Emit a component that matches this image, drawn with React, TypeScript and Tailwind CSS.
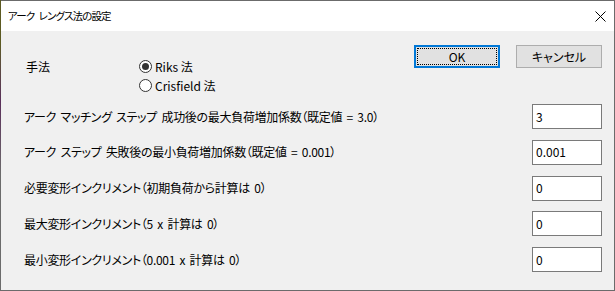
import React from "react";

const rows = [
  { label: "アーク マッチング ステップ 成功後の最大負荷増加係数（既定値 = 3.0）", value: "3" },
  { label: "アーク ステップ 失敗後の最小負荷増加係数（既定値 = 0.001）", value: "0.001" },
  { label: "必要変形インクリメント（初期負荷から計算は 0）", value: "0" },
  { label: "最大変形インクリメント（5 x 計算は 0）", value: "0" },
  { label: "最小変形インクリメント（0.001 x 計算は 0）", value: "0" },
];

function Radio({ checked, label }: { checked?: boolean; label: string }) {
  return (
    <div className="flex h-[19px] items-center gap-[3px]">
      <span className="flex h-[13px] w-[13px] items-center justify-center rounded-full border border-[#333] bg-white">
        {checked && <span className="h-[7px] w-[7px] rounded-full bg-[#333]" />}
      </span>
      <span>{label}</span>
    </div>
  );
}

export default function App() {
  return (
    <div className="flex h-[291px] w-[615px] font-['Yu_Gothic_UI','Noto_Sans_CJK_JP',sans-serif] text-[12px] leading-[16px] text-black [font-feature-settings:'palt']">
      {/* left window edge picks up the desktop colours */}
      <div className="w-px bg-linear-to-b from-[#5c5a22] from-15% via-[#5a2f5a] via-35% to-[#6b6b6b] to-60%" />
      <div className="flex flex-1 flex-col border-y border-r border-[#6b6b6b]">
        <div className="flex h-[30px] items-center bg-white pl-[7px] pr-[8px]">
          <span className="text-[10.5px] tracking-[-0.9px] [word-spacing:3px]">アーク レングス法の設定</span>
          <svg className="ml-auto" width="11" height="11" viewBox="0 0 11 11">
            <path d="M0.5 0.5 L10.5 10.5 M10.5 0.5 L0.5 10.5" stroke="#000" strokeWidth="1" />
          </svg>
        </div>

        <div className="flex flex-1 flex-col bg-[#f0f0f0] pt-[14px]">
          <div className="flex items-start">
            <div className="mt-[12px] flex pl-[25px]">
              <div className="h-[19px] w-[113px] leading-[19px]">手法</div>
              <div className="flex flex-col">
                <Radio checked label="Riks 法" />
                <Radio label="Crisfield 法" />
              </div>
            </div>
            <div className="ml-auto flex gap-[16px] pr-[12px]">
              <button className="h-[23px] w-[86px] border-2 border-[#0078d7] bg-[#e1e1e1] p-px">
                <span className="flex h-full w-full items-center justify-center border border-dotted border-black">
                  OK
                </span>
              </button>
              <button className="flex h-[23px] w-[86px] items-center justify-center border border-[#adadad] bg-[#e1e1e1]">
                キャンセル
              </button>
            </div>
          </div>

          <div className="mt-[9px] flex flex-col gap-[10.75px] pl-[23px] pr-[12px]">
            {rows.map((r) => (
              <div key={r.label} className="flex h-[25px] items-center justify-between">
                <span className="tracking-[-0.3px] [word-spacing:2px]">{r.label}</span>
                <div className="flex h-[25px] w-[70px] items-center border border-[#7a7a7a] bg-white pl-[3px]">
                  {r.value}
                </div>
              </div>
            ))}
          </div>
        </div>
      </div>
    </div>
  );
}
